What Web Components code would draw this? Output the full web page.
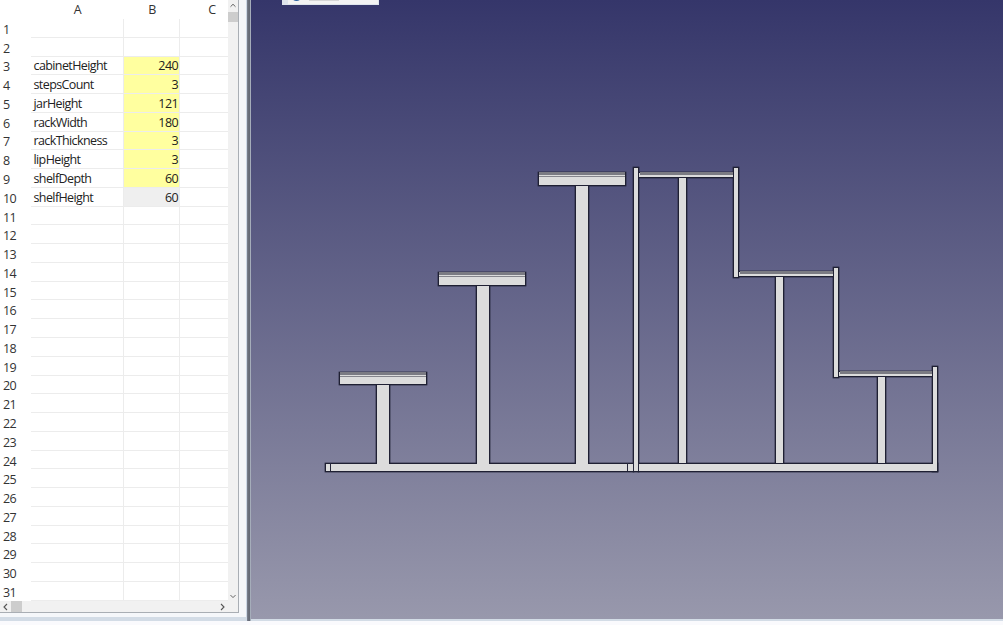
<!DOCTYPE html>
<html>
<head>
<meta charset="utf-8">
<style>
  html, body { margin: 0; height: 100%; overflow: hidden; background: #fafafd; }
  body { font-family: "Open Sans", "Liberation Sans", sans-serif; }
</style>
</head>
<body>
<cad-app></cad-app>
<script>
const SHEET_ROWS = {
  3: ["cabinetHeight", "240", "alias"],
  4: ["stepsCount", "3", "alias"],
  5: ["jarHeight", "121", "alias"],
  6: ["rackWidth", "180", "alias"],
  7: ["rackThickness", "3", "alias"],
  8: ["lipHeight", "3", "alias"],
  9: ["shelfDepth", "60", "alias"],
  10: ["shelfHeight", "60", "plain"]
};

class SheetTable extends HTMLElement {
  constructor() {
    super();
    this.attachShadow({ mode: "open" });
    let rows = "";
    for (let i = 1; i <= 31; i++) {
      const r = SHEET_ROWS[i] || ["", "", ""];
      rows += `<div class="num">${i}</div><div class="cell">${r[0]}</div><div class="cell val ${r[2]}">${r[1]}</div><div class="cell"></div>`;
    }
    this.shadowRoot.innerHTML = `
      <style>
        :host { display: block; overflow: hidden; height: 100%; background: #fff; }
        .grid {
          display: grid;
          grid-template-columns: 31px 93px 56px 64px;
          grid-template-rows: 19px;
          grid-auto-rows: 18.77px;
          font: 12.5px "Open Sans", "Liberation Sans", sans-serif;
          letter-spacing: -.6px;
          color: #222;
        }
        .head { display: flex; align-items: center; justify-content: center; color: #333; }
        .num { padding: 2px 0 0 3px; display: flex; align-items: center; color: #333; }
        .cell {
          border-right: 1px solid #ececec; border-bottom: 1px solid #ececec;
          box-sizing: border-box; padding: 1px 1px 0 2.5px; display: flex; align-items: center;
          white-space: nowrap;
        }
        .val { justify-content: flex-end; }
        .alias { background: #ffff9f; }
        .plain { background: #efefef; }
      </style>
      <div class="grid">
        <div class="head"></div><div class="head">A</div><div class="head">B</div><div class="head">C</div>
        ${rows}
      </div>`;
  }
}

class ScrollBar extends HTMLElement {
  constructor() {
    super();
    this.attachShadow({ mode: "open" });
  }
  connectedCallback() {
    const v = this.getAttribute("orient") === "v";
    const up = v ? "M3 7l3-3 3 3" : "M7 3L4 6l3 3";
    const down = v ? "M3 5l3 3 3-3" : "M4 3l3 3-3 3";
    this.shadowRoot.innerHTML = `
      <style>
        :host { display: flex; flex-direction: ${v ? "column" : "row"}; background: #f1f1f1; ${v ? "width: 10px;" : "height: 11px;"} }
        svg { width: ${v ? 10 : 11}px; height: 11px; flex: none; fill: none; stroke: #555; stroke-width: 1.1; }
        .thumb { background: #cdcdcd; flex: none; ${v ? "height: 10px; margin-top: 1px;" : "width: 11px;"} }
        .rest { flex: 1; }
      </style>
      <svg viewBox="0 0 ${v ? 12 : 11} 11"><path d="${up}"/></svg>
      <div class="thumb"></div>
      <div class="rest"></div>
      <svg viewBox="0 0 ${v ? 12 : 11} 11"><path d="${down}"/></svg>`;
  }
}

class SheetPane extends HTMLElement {
  constructor() {
    super();
    this.attachShadow({ mode: "open" });
    this.shadowRoot.innerHTML = `
      <style>
        :host {
          display: block; box-sizing: border-box; flex: none;
          width: 247px; height: 621px; background: #f5f7fa;
          border-right: 1px solid #cdd8e6; border-bottom: 4px solid #d3dce6;
        }
        .frame {
          display: grid; grid-template-columns: 228px 10px; grid-template-rows: 601px 11px;
          width: 239px; box-sizing: border-box; border-right: 1px solid #a9aeb4; border-bottom: 1px solid #a9aeb4;
        }
        .corner { background: #f1f1f1; }
      </style>
      <div class="frame">
        <sheet-table></sheet-table>
        <scroll-bar orient="v"></scroll-bar>
        <scroll-bar orient="h"></scroll-bar>
        <div class="corner"></div>
      </div>`;
  }
}

class ModelView extends HTMLElement {
  constructor() {
    super();
    this.attachShadow({ mode: "open" });
    // solids in page pixels, minus the view's left edge (251)
    const solids = [
      // free standing steps
      [88, 372, 87, 12], [125, 384, 13, 80],
      [187, 272, 87, 13], [225, 285, 13, 179],
      [287, 172, 87, 13], [324, 185, 13, 279],
      // base rails
      [74, 463, 308, 8], [387, 463, 299, 8],
      // assembled rack uprights
      [382, 167, 5, 304], [482, 167, 5, 110], [582, 267, 5, 110], [681, 366, 5, 105],
      // shelves
      [387, 172, 95, 5], [487, 271, 95, 5], [587, 371, 94, 5],
      // supports
      [427, 177, 8, 286], [524, 276, 8, 187], [626, 376, 8, 87]
    ];
    const rects = solids.map(s => `<rect x="${s[0] + .5}" y="${s[1] + .5}" width="${s[2]}" height="${s[3]}"/>`).join("");
    const fills = solids.map(s => `<rect x="${s[0] + 1}" y="${s[1] + 1}" width="${s[2] - 1}" height="${s[3] - 1}"/>`).join("");
    // lip on top of each shelf: grey band, then a thin bright line
    const lips = [[88, 372, 87], [187, 272, 87], [287, 172, 87], [388, 172, 94], [488, 271, 94], [588, 371, 93]];
    const bands = lips.map(l => `<rect x="${l[0] + 1}" y="${l[1]}" width="${l[2] - 1}" height="3"/>`).join("");
    const seams = lips.slice(0, 3).map(l => `<rect x="${l[0] + 1}" y="${l[1] + 4}" width="${l[2] - 1}" height="1"/>`).join("");
    this.shadowRoot.innerHTML = `
      <style>
        :host {
          display: block; position: relative; flex: 1; height: 619px; overflow: hidden;
          background: linear-gradient(#35366a, #9898ac);
        }
        svg { display: block; width: 100%; height: 100%; filter: blur(.35px); }
        .float {
          position: absolute; left: 31px; top: -14px; width: 97px; height: 19px; box-sizing: border-box;
          background: #f3f3f3; border: 1px solid #dfe5ec; border-left-width: 6px;
        }
        .float i { position: absolute; left: 3px; top: 3px; width: 11px; height: 11px; border-radius: 50%; background: #2a5f9e; }
        .float b { position: absolute; left: 21px; top: 13px; width: 30px; height: 1px; background: #d6d6d6; }
      </style>
      <svg viewBox="0 0 752 619">
        <g fill="#1f2033" stroke="#1f2033" stroke-width="1.7">${rects}</g>
        <g fill="#dcdcdc">${fills}</g>
        <g fill="#7b7b83">${bands}</g>
        <g fill="#85858c">${seams}</g>
        <g fill="#26273a">
          <rect x="79" y="463" width="1" height="8"/>
          <rect x="376" y="463" width="1" height="8"/>
          <rect x="382" y="463" width="1" height="8"/>
          <rect x="387" y="463" width="1" height="8"/>
        </g>
      </svg>
      <div class="float"><i></i><b></b></div>`;
  }
}

class CadApp extends HTMLElement {
  constructor() {
    super();
    this.attachShadow({ mode: "open" });
    this.shadowRoot.innerHTML = `
      <style>
        :host { display: block; width: 1003px; height: 625px; overflow: hidden; background: #fafafd; }
        .main { display: flex; align-items: flex-start; }
        .split { width: 4px; height: 621px; flex: none; background: linear-gradient(90deg, #7d8390, #5f6470 60%, #c5cedb); }
        .right { flex: 1; height: 621px; background: #d3dce6; }
      </style>
      <div class="main">
        <sheet-pane></sheet-pane>
        <div class="split"></div>
        <div class="right"><model-view></model-view></div>
      </div>`;
  }
}

customElements.define("sheet-table", SheetTable);
customElements.define("scroll-bar", ScrollBar);
customElements.define("sheet-pane", SheetPane);
customElements.define("model-view", ModelView);
customElements.define("cad-app", CadApp);
</script>
</body>
</html>
